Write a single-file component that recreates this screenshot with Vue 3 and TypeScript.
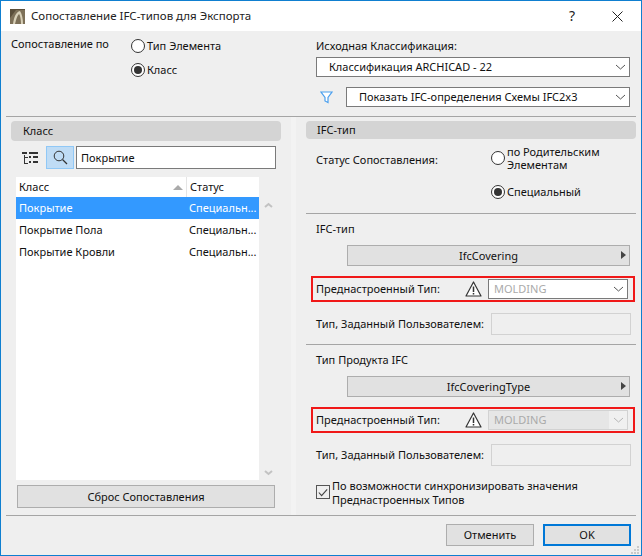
<script setup lang="ts">
interface Row { name: string; status: string; selected?: boolean }
const rows: Row[] = [
  { name: 'Покрытие', status: 'Специальн...', selected: true },
  { name: 'Покрытие Пола', status: 'Специальн...' },
  { name: 'Покрытие Кровли', status: 'Специальн...' },
]
</script>

<template>
  <div class="win">
    <header class="title">
      <svg class="logo" width="15" height="15" viewBox="0 0 15 15">
        <rect width="15" height="15" fill="#5a4e3a" />
        <path d="M0 15V9L6 1h9v14z" fill="#7d7058" />
        <path d="M3 15C4 8 6 3 10 2c2 3 3 8 3 13h-2C11 10 10 6 9 5 7 7 6 11 5 15z" fill="#d8d0b8" />
      </svg>
      <span class="title-text">Сопоставление IFC-типов для Экспорта</span>
      <span class="help">?</span>
      <svg class="close" width="11" height="11" viewBox="0 0 11 11"><path d="M.5.5l10 10M10.500.5l-10 10" stroke="#222" fill="none" /></svg>
    </header>

    <section class="top">
      <div class="map-label">Сопоставление по</div>
      <div class="radios">
        <label class="radio-row"><span class="radio"></span>Тип Элемента</label>
        <label class="radio-row"><span class="radio on"></span>Класс</label>
      </div>
      <div class="source">
        <div class="source-label">Исходная Классификация:</div>
        <div class="select source-select"><span>Классификация ARCHICAD - 22</span><svg class="chev" width="11" height="6" viewBox="0 0 11 6"><path d="M1 1l4.500 4L10 1" fill="none" stroke="#555" /></svg></div>
        <div class="filter-row">
          <svg class="funnel" width="13" height="13" viewBox="0 0 13 13"><path d="M1 1h11L8 6.500v5L5 10V6.500z" fill="#fff" stroke="#4a9fee" stroke-width="1.200" /></svg>
          <div class="select filter-select"><span>Показать IFC-определения Схемы IFC2x3</span><svg class="chev" width="11" height="6" viewBox="0 0 11 6"><path d="M1 1l4.500 4L10 1" fill="none" stroke="#555" /></svg></div>
        </div>
      </div>
    </section>

    <hr class="sep" />

    <section class="middle">
      <div class="left">
        <div class="panel-head">Класс</div>
        <div class="tools">
          <svg class="tree" width="16" height="13" viewBox="0 0 16 13">
            <path d="M0 1h5v2H0zM7 1h9v2H7zM7 5h2v2H7zM11 5h5v2h-5zM7 10h2v2H7zM11 10h5v2h-5zM2 4h1v8h3v1H2zM3 6h3v1H3z" fill="#333" />
          </svg>
          <div class="search-btn">
            <svg width="15" height="15" viewBox="0 0 15 15"><circle cx="6" cy="6" r="4.800" fill="none" stroke="#333" /><path d="M9.500 9.500l4.500 4.500" stroke="#333" stroke-width="1.200" /></svg>
          </div>
          <div class="search-input">Покрытие</div>
        </div>
        <div class="list-wrap">
          <div class="list">
            <div class="list-head">
              <div class="col-a">Класс<span class="sort"></span></div>
              <div class="col-b">Статус</div>
            </div>
            <div v-for="r in rows" :key="r.name" class="row" :class="{ sel: r.selected }">
              <span class="cell-a">{{ r.name }}</span><span class="cell-b">{{ r.status }}</span>
            </div>
          </div>
          <div class="scroll">
            <svg width="9" height="6" viewBox="0 0 9 6"><path d="M1 5l3.500-3L8 5" fill="none" stroke="#c2c2c2" stroke-width="2" /></svg>
            <svg width="9" height="6" viewBox="0 0 9 6"><path d="M1 1l3.500 3L8 1" fill="none" stroke="#c2c2c2" stroke-width="2" /></svg>
          </div>
        </div>
        <div class="btn reset">Сброс Сопоставления</div>
      </div>

      <div class="stripe"></div>

      <div class="right">
        <div class="panel-head rh">IFC-тип</div>
        <div class="status">
          <div class="status-label">Статус Сопоставления:</div>
          <div class="status-opts">
            <div class="radio-row two"><span class="radio"></span><span>по Родительским<br />Элементам</span></div>
            <div class="radio-row spec"><span class="radio on"></span>Специальный</div>
          </div>
        </div>
        <hr class="rsep first" />
        <div class="group-label">IFC-тип</div>
        <div class="btn wide"><span>IfcCovering</span><i class="tri"></i></div>
        <div class="red">
          <span class="red-label">Преднастроенный Тип:</span>
          <svg class="warn" width="17" height="16" viewBox="0 0 17 16"><path d="M8.500 1L16 15H1z" fill="#fff" stroke="#333" stroke-width="1.200" stroke-linejoin="round" /><path d="M8.500 5.500v5.500M8.500 12v1.500" stroke="#333" stroke-width="1.500" /></svg>
          <div class="select mini"><span>MOLDING</span><svg class="chev" width="11" height="6" viewBox="0 0 11 6"><path d="M1 1l4.500 4L10 1" fill="none" stroke="#555" /></svg></div>
        </div>
        <div class="field"><span>Тип, Заданный Пользователем:</span><div class="blank"></div></div>
        <hr class="rsep second" />
        <div class="group-label">Тип Продукта IFC</div>
        <div class="btn wide"><span>IfcCoveringType</span><i class="tri"></i></div>
        <div class="red">
          <span class="red-label">Преднастроенный Тип:</span>
          <svg class="warn" width="17" height="16" viewBox="0 0 17 16"><path d="M8.500 1L16 15H1z" fill="#fff" stroke="#333" stroke-width="1.200" stroke-linejoin="round" /><path d="M8.500 5.500v5.500M8.500 12v1.500" stroke="#333" stroke-width="1.500" /></svg>
          <div class="select mini off"><span>MOLDING</span><div class="off-arrow"><svg class="chev" width="11" height="6" viewBox="0 0 11 6"><path d="M1 1l4.500 4L10 1" fill="none" stroke="#b5b5b5" /></svg></div></div>
        </div>
        <div class="field"><span>Тип, Заданный Пользователем:</span><div class="blank"></div></div>
        <div class="sync">
          <span class="check"><svg width="13" height="13" viewBox="0 0 13 13"><path d="M2 6.500l3 3.500 6-7" fill="none" stroke="#444" stroke-width="1.200" /></svg></span>
          <span>По возможности синхронизировать значения<br />Преднастроенных Типов</span>
        </div>
      </div>
    </section>

    <hr class="sep" />

    <footer class="foot">
      <div class="btn foot-btn">Отменить</div>
      <div class="btn foot-btn ok">OK</div>
      <svg class="grip" width="9" height="9" viewBox="0 0 9 9"><path d="M6 1h2v2H6zM3 4h2v2H3zM6 4h2v2H6zM0 7h2v2H0zM3 7h2v2H3zM6 7h2v2H6z" fill="#c9c9c9" /></svg>
    </footer>
  </div>
</template>

<style>
html, body { margin: 0; padding: 0; background: #efefef; }
</style>

<style scoped>
.win {
  position: relative;
  box-sizing: border-box;
  width: 642px;
  height: 556px;
  border: 1px solid #0f7fd0;
  background: #efefef;
  font: 11px/14px "Noto Sans", sans-serif;
  color: #111;
  overflow: hidden;
  display: flex;
  flex-direction: column;
}
.title {
  height: 30px;
  background: #fff;
  display: flex;
  align-items: center;
  flex: none;
}
.logo { margin-left: 9px; }
.title-text { margin-left: 6px; font-size: 11.5px; color: #222; }
.help { margin-left: auto; font-size: 14px; margin-right: 37px; color: #222; }
.close { margin-right: 18px; }
.top { height: 85px; flex: none; display: flex; }
.map-label { margin: 6px 0 0 10px; width: 120px; }
.radios { width: 185px; padding-top: 8px; }
.radio-row { display: flex; align-items: center; height: 14px; }
.radio-row + .radio-row { margin-top: 10px; }
.radio {
  box-sizing: border-box;
  width: 14px;
  height: 14px;
  margin-right: 2px;
  border: 1px solid #333;
  border-radius: 50%;
  background: #fff;
  flex: none;
  position: relative;
}
.radio.on::after {
  content: "";
  position: absolute;
  inset: 2px;
  border-radius: 50%;
  background: #333;
}
.source { width: 314px; padding-top: 8px; }
.source-label { height: 14px; margin-bottom: 4px; }
.select {
  box-sizing: border-box;
  display: flex;
  align-items: center;
  justify-content: space-between;
  border: 1px solid #7a7a7a;
  background: #fff;
  padding-right: 3px;
}
.source-select { height: 20px; padding-left: 12px; }
.filter-row { display: flex; align-items: center; margin-top: 10px; }
.funnel { margin-left: 4px; margin-right: 13px; }
.filter-select { width: 284px; height: 20px; padding-left: 12px; }
.sep { height: 1px; border: 0; margin: 0 5px; background: #a5a5a5; flex: none; }
.middle { height: 398px; flex: none; display: flex; }
.left { width: 270px; margin-left: 10px; padding-top: 4px; }
.panel-head {
  height: 20px;
  border-radius: 4px;
  background: #d4d4d4;
  padding-left: 12px;
  line-height: 20px;
}
.tools { display: flex; align-items: center; margin-top: 5px; height: 23px; }
.tree { margin-left: 11px; margin-right: 8px; }
.search-btn {
  box-sizing: border-box;
  width: 28px;
  height: 23px;
  background: #bfdcf5;
  border: 1px solid #90c8f6;
  display: flex;
  align-items: center;
  justify-content: center;
}
.search-input {
  box-sizing: border-box;
  width: 200px;
  height: 23px;
  margin-left: 2px;
  border: 1px solid #7a7a7a;
  background: #fff;
  padding-left: 4px;
  line-height: 21px;
}
.list-wrap { display: flex; margin-top: 8px; margin-left: 5px; height: 303px; }
.list { width: 243px; background: #fff; }
.list-head { display: flex; height: 20px; line-height: 20px; }
.col-a {
  width: 171px;
  padding-left: 3px;
  box-sizing: border-box;
  border-right: 1px solid #e5e5e5;
  position: relative;
}
.col-b { padding-left: 3px; }
.sort {
  position: absolute;
  right: 3px;
  top: 8px;
  border: 5px solid transparent;
  border-top: 0;
  border-bottom: 5px solid #aaa;
}
.row { display: flex; height: 22px; line-height: 22px; padding-left: 3px; }
.row.sel { background: #3399ff; color: #fff; }
.cell-a { width: 170px; flex: none; }
.cell-b { white-space: nowrap; }
.scroll {
  width: 13px;
  margin-left: 3px;
  padding: 25px 0 4px;
  box-sizing: border-box;
  display: flex;
  flex-direction: column;
  justify-content: space-between;
  align-items: center;
}
.btn {
  box-sizing: border-box;
  display: flex;
  align-items: center;
  justify-content: center;
  background: #e1e1e1;
  border: 1px solid #adadad;
}
.reset { width: 258px; height: 23px; margin: 5px 0 0 6px; }
.stripe { width: 5px; margin-left: 10px; background: #f3f3f3; }
.right { width: 330px; margin-left: 10px; padding-top: 4px; }
.rh { height: 18px; line-height: 18px; padding-left: 11px; }
.status { display: flex; margin-top: 6px; height: 66px; }
.status-label { width: 175px; padding-left: 10px; padding-top: 8px; box-sizing: content-box; flex: none; }
.status-opts { width: 140px; }
.status-opts .two { height: 26px; padding-top: 0; line-height: 13px; }
.status-opts .spec { margin-top: 14px; }
.rsep { height: 1px; border: 0; margin: 0; background: #a5a5a5; }
.rsep.first { margin-top: 2px; }
.group-label { margin: 8px 0 0 10px; height: 14px; }
.wide { position: relative; width: 283px; height: 21px; margin: 9px 0 0 41px; }
.tri {
  position: absolute;
  right: 3px;
  top: 5px;
  border: 4px solid transparent;
  border-left: 5px solid #444;
  border-right: 0;
}
.red {
  box-sizing: border-box;
  display: flex;
  align-items: center;
  width: 324px;
  height: 26px;
  margin: 10px 0 0 5px;
  border: 2px solid #f01818;
  padding-left: 3px;
}
.red-label { width: 149px; flex: none; }
.warn { flex: none; margin-right: 6px; }
.mini { width: 140px; height: 20px; margin-top: 0; padding-left: 5px; color: #aaa; }
.mini.off { border-color: #d2d2d2; background: #e6e6e6; padding-right: 0; }
.off-arrow { width: 18px; height: 18px; background: #f0f0f0; display: flex; align-items: center; justify-content: center; }
.field { display: flex; align-items: center; justify-content: space-between; width: 315px; margin: 11px 0 0 10px; height: 22px; white-space: nowrap; }
.blank { box-sizing: border-box; width: 140px; height: 22px; border: 1px solid #d2d2d2; }
.rsep.second { margin-top: 9px; }
.sync { display: flex; margin: 13px 0 0 10px; line-height: 14px; }
.check {
  box-sizing: border-box;
  width: 14px;
  height: 14px;
  margin: 6px 2px 0 0;
  border: 1px solid #555;
  flex: none;
  display: flex;
}
.foot { flex: 1; display: flex; justify-content: flex-end; padding: 8px 10px 0 0; position: relative; }
.foot-btn { width: 88px; height: 22px; margin-left: 9px; }
.ok { border: 2px solid #0078d7; }
.grip { position: absolute; right: 1px; bottom: 1px; }
</style>
